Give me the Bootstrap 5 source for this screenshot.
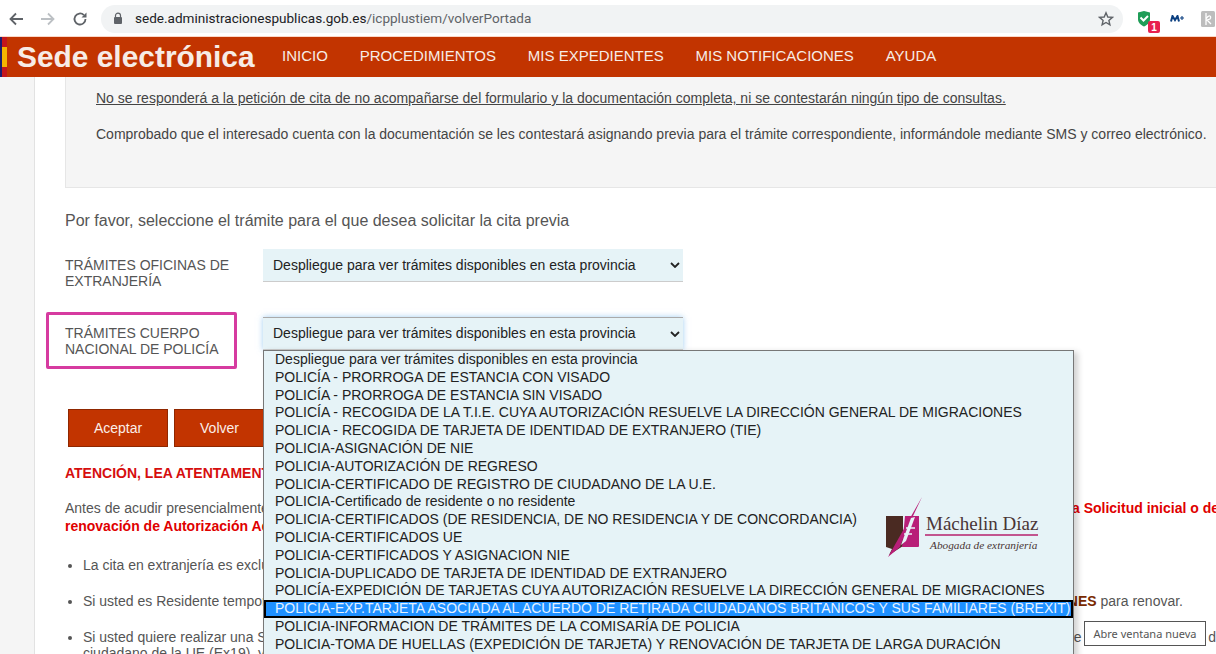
<!DOCTYPE html>
<html lang="es">
<head>
<meta charset="utf-8">
<title>Sede electrónica</title>
<link rel="stylesheet" href="https://cdn.jsdelivr.net/npm/bootstrap@5.3.0/dist/css/bootstrap.min.css">
<style>
html,body{height:654px;overflow:hidden}
body{font-family:"Liberation Sans",Arial,sans-serif;background:#fff;color:#444;font-size:14px;position:relative}
.tbar{height:37px;padding:4px 0 3px 0;background:#fff;border-bottom:1px solid #fbd8c8}
.tbtn{width:16px;height:16px;flex:none}
.urlbox{margin-left:13px;width:1022px;height:28px;border-radius:14px;background:#f1f3f4;font-family:"Roboto","Liberation Sans",sans-serif;font-size:13.55px;color:#5f6368;padding:0 9px 0 12px;flex:none}
.urlbox b{font-weight:400;color:#202124}
.brandbar{height:40px;background:#c23400;color:#f7ece6}
.flagbit{width:7px;height:40px;flex:none;background:linear-gradient(90deg,#1c1c6e 0 2px,transparent 2px),linear-gradient(#c4161c 0 10px,#f5b400 10px 30px,#c4161c 30px)}
.brandname{font-size:29.9px;font-weight:700;margin-left:10px;width:265px;line-height:44px;white-space:nowrap;flex:none}
.navlink{font-size:15px;color:#f7ece6;text-decoration:none;margin-right:31.8px;white-space:nowrap;position:relative;top:-1px}
.pagewrap{height:577px;overflow:hidden;background:#f5f5f5;padding-left:34px}
.maincol{background:#fff;border-left:1px solid #e2e2e2;height:577px;padding:0 0 0 30px;width:1182px}
.infobox{height:111px;background:#f5f5f5;border:1px solid #e6e6e6;border-top:0;margin-right:-2px;padding:14px 0 0 30px;white-space:nowrap;color:#444}
.infobox p{margin:0 0 21px;line-height:15px}
.pleads{font-size:16px;margin:24px 0 19px;line-height:18px;color:#555}
.frow{display:flex;align-items:flex-start}
.flabel{width:198px;font-size:14px;line-height:16px;color:#555;padding-top:8px;flex:none}
.fsel{width:420px;height:33px;background:#e6f3f7;border:0;border-bottom:1px solid #ccc;border-radius:0;color:#222;font-size:14px;padding:0 0 0 10px;display:flex;align-items:center;justify-content:space-between}
.fsel.isopen{border-top:1px solid #aaa;box-shadow:0 0 6px rgba(102,175,233,.6)}
.caretico{width:10px;height:6px;margin-right:3px}
.rowgap{margin-top:28px}
.pinkbox{position:absolute;left:46px;top:312px;width:191px;height:57px;border:3px solid #d63ba0;border-radius:2px}
.actbtns{margin:52px 0 0 3px;gap:6px}
.actbtn{width:100px;height:38px;background:#c23400;border:1px solid #8f2700;border-radius:0;color:#fbeee8;font-size:14px;padding:0;text-align:center;line-height:36px;text-decoration:none}
.actbtn.narrowbtn{width:91px}
.attn{color:#d60e0e;font-weight:700;font-size:14px;margin:18px 0 0;line-height:16px;white-space:nowrap}
.introp{margin:18px 0 0;line-height:18px;white-space:nowrap;font-size:14px;color:#555}
.introp b{color:#e00000}
.dotlist{margin:22px 0 0;padding-left:18px;font-size:14px;color:#555;white-space:nowrap}
.dotlist li{margin-bottom:20px;line-height:16px}
.dotlist b{color:#7a2a00}
.droplist{position:absolute;left:263px;top:350px;width:811px;height:320px;background:#e6f3f7;border:1px solid #777;color:#222;font-size:14px;box-shadow:4px 2px 6px rgba(0,0,0,.18);overflow:hidden}
.dropitem{height:17.8px;line-height:17.8px;padding-left:11px;white-space:nowrap}
.dropitem.cur{background:#1e90ff;color:#e4f2ff;outline:2px solid #000;outline-offset:-2px}
.logomark{position:absolute;left:885px;top:495px;width:156px;height:66px}
.tiptext{position:absolute;left:1084px;top:621px;width:122px;height:25px;background:#fff;border:1px solid #555;font-family:"Noto Sans","DejaVu Sans",sans-serif;font-size:11px;color:#555;text-align:center;line-height:23px;white-space:nowrap}
.ptext{font-family:"Liberation Serif",serif;fill:#4a3535}
.extwrap{margin-left:14px}
</style>
</head>
<body>
<div class="tbar d-flex align-items-center">
  <svg class="tbtn" style="margin-left:8px" viewBox="0 0 16 16"><path d="M15 8H3M8 2.500 2.500 8 8 13.500" fill="none" stroke="#5f6368" stroke-width="1.800"/></svg>
  <svg class="tbtn" style="margin-left:16px" viewBox="0 0 16 16"><path d="M1 8h12M8 2.500 13.500 8 8 13.500" fill="none" stroke="#bcc0c4" stroke-width="1.800"/></svg>
  <svg class="tbtn" style="margin-left:16px" viewBox="0 0 16 16"><path d="M13.500 8a5.500 5.500 0 1 1-1.600-3.900" fill="none" stroke="#5f6368" stroke-width="1.800"/><path d="M14.500 1.500v5h-5z" fill="#5f6368"/></svg>
  <div class="urlbox d-flex align-items-center">
    <svg width="10" height="13" viewBox="0 0 10 13" class="me-2 flex-none"><path d="M2.500 5.500V3.600a2.500 2.500 0 0 1 5 0v1.900" fill="none" stroke="#5f6368" stroke-width="1.200"/><rect x="1" y="5" width="8" height="7" rx="1" fill="#5f6368"/></svg>
    <span class="ms-1"><b>sede.administracionespublicas.gob.es</b>/icpplustiem/volverPortada</span>
    <svg class="ms-auto" width="16" height="16" viewBox="0 0 16 16"><path d="M8 1.800 9.800 6l4.600.4-3.500 3 1 4.500L8 11.500l-3.900 2.400 1-4.500-3.500-3L6.200 6z" fill="none" stroke="#5f6368" stroke-width="1.400"/></svg>
  </div>
  <svg class="extwrap flex-none" width="23" height="24" viewBox="0 0 23 24" style="margin-top:6px"><path d="M1 2.500 7 1l6 1.500v6.500c0 4-3 6-6 7.500C4 15 1 13 1 9z" fill="#1f9d57"/><path d="M3.500 7.500l3 3 4.500-4.500" fill="none" stroke="#fff" stroke-width="2"/><rect x="11" y="11" width="12" height="12" rx="2" fill="#e8204f"/><text x="17" y="21" font-size="10" font-weight="700" text-anchor="middle" fill="#fff" font-family="Liberation Sans">1</text></svg>
  <svg class="flex-none" width="14" height="7" viewBox="0 0 14 7" style="margin-left:10px"><path d="M1 6.500 2.500 1 5 5 7.500 1 9 6.500" fill="none" stroke="#0b3f80" stroke-width="2"/><path d="M12 1v4M10 3h4" stroke="#0b3f80" stroke-width="1.100"/></svg>
  <svg class="flex-none" width="14" height="16" viewBox="0 0 14 16" style="margin-left:17px"><rect width="14" height="16" rx="1.500" fill="#bdbdbd"/><path d="M5 2v12M5 8c3-5 6-3 4 0L6 9l4 4" fill="none" stroke="#fff" stroke-width="1.300"/></svg>
</div>
<nav class="brandbar d-flex align-items-center">
  <div class="flagbit"></div>
  <div class="brandname">Sede electrónica</div>
  <a class="navlink" href="#">INICIO</a>
  <a class="navlink" href="#">PROCEDIMIENTOS</a>
  <a class="navlink" href="#">MIS EXPEDIENTES</a>
  <a class="navlink" href="#">MIS NOTIFICACIONES</a>
  <a class="navlink" href="#">AYUDA</a>
</nav>
<div class="pagewrap">
  <main class="maincol">
    <div class="infobox">
      <p><u>No se responderá a la petición de cita de no acompañarse del formulario y la documentación completa, ni se contestarán ningún tipo de consultas.</u></p>
      <p>Comprobado que el interesado cuenta con la documentación se les contestará asignando previa para el trámite correspondiente, informándole mediante SMS y correo electrónico.</p>
    </div>
    <p class="pleads">Por favor, seleccione el trámite para el que desea solicitar la cita previa</p>
    <div class="frow">
      <div class="flabel">TRÁMITES OFICINAS DE EXTRANJERÍA</div>
      <div class="fsel"><span>Despliegue para ver trámites disponibles en esta provincia</span><svg class="caretico" viewBox="0 0 10 6"><path d="M1 1l4 4 4-4" fill="none" stroke="#222" stroke-width="1.800"/></svg></div>
    </div>
    <div class="frow rowgap">
      <div class="flabel">TRÁMITES CUERPO NACIONAL DE POLICÍA</div>
      <div class="fsel isopen"><span>Despliegue para ver trámites disponibles en esta provincia</span><svg class="caretico" viewBox="0 0 10 6"><path d="M1 1l4 4 4-4" fill="none" stroke="#222" stroke-width="1.800"/></svg></div>
    </div>
    <div class="d-flex actbtns">
      <a class="actbtn" href="#">Aceptar</a>
      <a class="actbtn narrowbtn" href="#">Volver</a>
    </div>
    <p class="attn">ATENCIÓN, LEA ATENTAMENTE LAS SIGUIENTES INSTRUCCIONES</p>
    <p class="introp">Antes de acudir presencialmente a la cita deberá llevar la documentación necesaria para realizar el trámite, por ejemplo para los trámites de cualquier tipo, como <b>la Solicitud inicial o de<br>renovación de Autorización Administrativa</b></p>
    <ul class="dotlist">
      <li>La cita en extranjería es exclusivamente para el trámite que se solicita</li>
      <li>Si usted es Residente temporal deberá solicitar cita en el apartado correspondiente a la Oficina de la <b>TRÁMITES OFICINAS DE EXTRANJERÍA Y MIGRACIONES</b> para renovar.</li>
      <li>Si usted quiere realizar una Solicitud de tarjeta de residencia de familiar de ciudadano de la UE, puede consultar los requisitos y la documentación por el nombre de la tarjeta que se de<br>ciudadano de la UE (Ex19), y solicite la cita</li>
    </ul>
  </main>
</div>
<div class="pinkbox"></div>
<div class="droplist">
  <div class="dropitem">Despliegue para ver trámites disponibles en esta provincia</div>
  <div class="dropitem">POLICÍA - PRORROGA DE ESTANCIA CON VISADO</div>
  <div class="dropitem">POLICÍA - PRORROGA DE ESTANCIA SIN VISADO</div>
  <div class="dropitem">POLICÍA - RECOGIDA DE LA T.I.E. CUYA AUTORIZACIÓN RESUELVE LA DIRECCIÓN GENERAL DE MIGRACIONES</div>
  <div class="dropitem">POLICIA - RECOGIDA DE TARJETA DE IDENTIDAD DE EXTRANJERO (TIE)</div>
  <div class="dropitem">POLICIA-ASIGNACIÓN DE NIE</div>
  <div class="dropitem">POLICIA-AUTORIZACIÓN DE REGRESO</div>
  <div class="dropitem">POLICIA-CERTIFICADO DE REGISTRO DE CIUDADANO DE LA U.E.</div>
  <div class="dropitem">POLICIA-Certificado de residente o no residente</div>
  <div class="dropitem">POLICIA-CERTIFICADOS (DE RESIDENCIA, DE NO RESIDENCIA Y DE CONCORDANCIA)</div>
  <div class="dropitem">POLICIA-CERTIFICADOS UE</div>
  <div class="dropitem">POLICIA-CERTIFICADOS Y ASIGNACION NIE</div>
  <div class="dropitem">POLICIA-DUPLICADO DE TARJETA DE IDENTIDAD DE EXTRANJERO</div>
  <div class="dropitem">POLICÍA-EXPEDICIÓN DE TARJETAS CUYA AUTORIZACIÓN RESUELVE LA DIRECCIÓN GENERAL DE MIGRACIONES</div>
  <div class="dropitem cur">POLICIA-EXP.TARJETA ASOCIADA AL ACUERDO DE RETIRADA CIUDADANOS BRITANICOS Y SUS FAMILIARES (BREXIT)</div>
  <div class="dropitem">POLICIA-INFORMACION DE TRÁMITES DE LA COMISARÍA DE POLICIA</div>
  <div class="dropitem">POLICIA-TOMA DE HUELLAS (EXPEDICIÓN DE TARJETA) Y RENOVACIÓN DE TARJETA DE LARGA DURACIÓN</div>
</div>
<svg class="logomark" viewBox="0 0 156 66">
  <path d="M1 21h17v30L4 60l3-6-6-2z" fill="#4a2a22"/>
  <path d="M20 21h14v30a1 1 0 0 1-1 1H17z" fill="#b81f78"/>
  <path d="M37 2 3 62 15 52l5-14z" fill="#b81f78"/>
  <path d="M26 23l4-1-9 24-5 4z" fill="#e6f3f7"/>
  <path d="M21 33h9M19 39h8" stroke="#e6f3f7" stroke-width="1.500"/>
  <text x="41" y="35" class="ptext" font-size="19">Máchelin Díaz</text>
  <rect x="40" y="39" width="113" height="2" fill="#c2558f"/>
  <text x="45" y="54" class="ptext" font-size="11.300" font-style="italic">Abogada de extranjería</text>
</svg>
<div class="tiptext">Abre ventana nueva</div>
</body>
</html>
